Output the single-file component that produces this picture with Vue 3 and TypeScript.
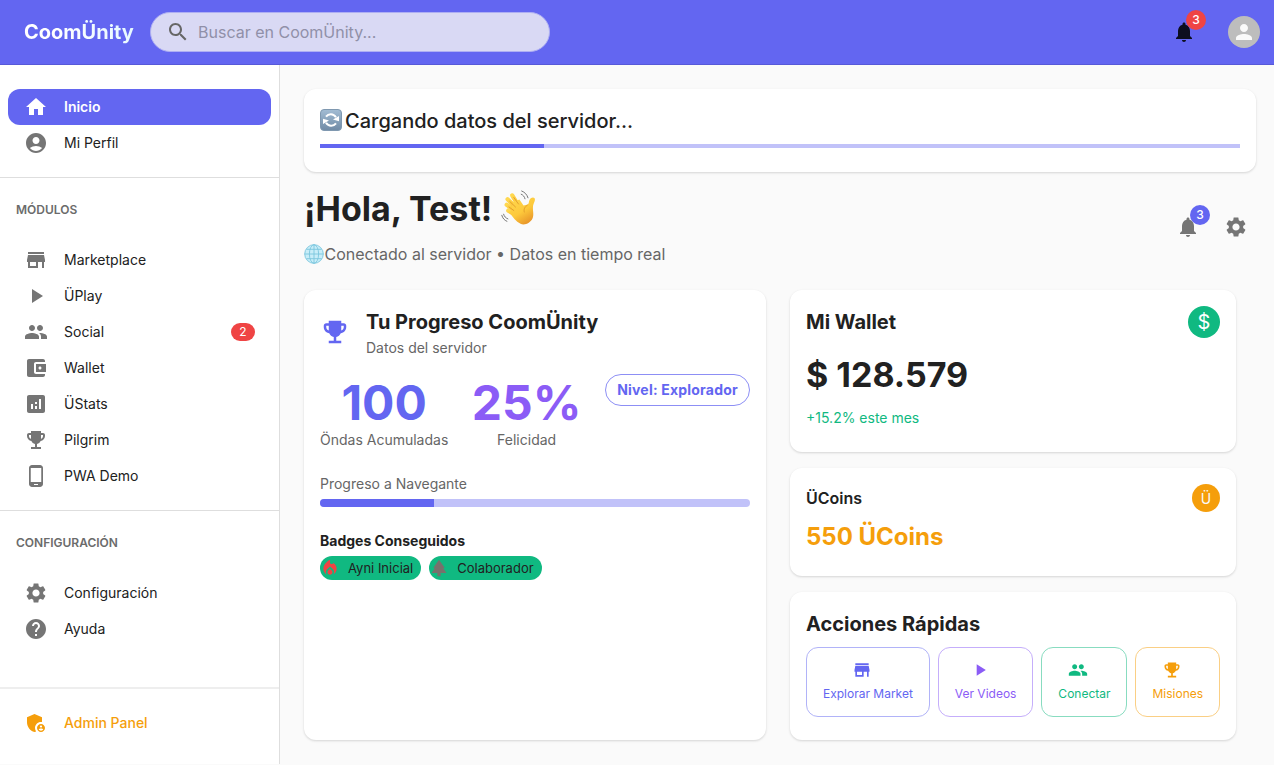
<script setup lang="ts">
interface NavItem {
  label: string
  icon: string
  badge?: number
}

interface QuickAction {
  label: string
  icon: string
  tone: string
}

const icons: Record<string, string> = {
  search:
    'M15.5 14h-.79l-.28-.27C15.41 12.59 16 11.11 16 9.5 16 5.91 13.09 3 9.5 3S3 5.91 3 9.5 5.91 16 9.5 16c1.61 0 3.09-.59 4.23-1.57l.27.28v.79l5 4.99L20.49 19zm-6 0C7.01 14 5 11.99 5 9.5S7.01 5 9.5 5 14 7.01 14 9.5 11.99 14 9.5 14',
  bell: 'M12 22c1.1 0 2-.9 2-2h-4c0 1.1.89 2 2 2m6-6v-5c0-3.07-1.64-5.64-4.5-6.32V4c0-.83-.67-1.5-1.5-1.5s-1.5.67-1.5 1.5v.68C7.63 5.36 6 7.92 6 11v5l-2 2v1h16v-1z',
  person:
    'M12 12c2.21 0 4-1.79 4-4s-1.79-4-4-4-4 1.79-4 4 1.79 4 4 4m0 2c-2.67 0-8 1.34-8 4v2h16v-2c0-2.66-5.33-4-8-4',
  home: 'M10 20v-6h4v6h5v-8h3L12 3 2 12h3v8z',
  account:
    'M12 2C6.48 2 2 6.48 2 12s4.48 10 10 10 10-4.48 10-10S17.52 2 12 2m0 4c1.93 0 3.5 1.57 3.5 3.5S13.93 13 12 13s-3.5-1.57-3.5-3.5S10.07 6 12 6m0 14c-2.03 0-4.43-.82-6.14-2.88C7.55 15.8 9.68 15 12 15s4.45.8 6.14 2.12C16.43 19.18 14.03 20 12 20',
  store: 'M20 4H4v2h16zm1 10v-2l-1-5H4l-1 5v2h1v6h10v-6h4v6h2v-6zm-9 4H6v-4h6z',
  play: 'M8 5v14l11-7z',
  people:
    'M16 11c1.66 0 2.99-1.34 2.99-3S17.66 5 16 5s-3 1.34-3 3 1.34 3 3 3m-8 0c1.66 0 2.99-1.34 2.99-3S9.66 5 8 5 5 6.34 5 8s1.34 3 3 3m0 2c-2.33 0-7 1.17-7 3.5V19h14v-2.5c0-2.33-4.67-3.5-7-3.5m8 0c-.29 0-.62.02-.97.05 1.16.84 1.97 1.97 1.97 3.45V19h6v-2.5c0-2.33-4.67-3.5-7-3.5',
  wallet:
    'M21 18v1c0 1.1-.9 2-2 2H5c-1.11 0-2-.9-2-2V5c0-1.1.89-2 2-2h14c1.1 0 2 .9 2 2v1h-9c-1.11 0-2 .9-2 2v8c0 1.1.89 2 2 2zm-9-2h10V8H12zm4-2.5c-.83 0-1.5-.67-1.5-1.5s.67-1.5 1.5-1.5 1.5.67 1.5 1.5-.67 1.5-1.5 1.5',
  stats:
    'M19 3H5c-1.1 0-2 .9-2 2v14c0 1.1.9 2 2 2h14c1.1 0 2-.9 2-2V5c0-1.1-.9-2-2-2M9 17H7v-5h2zm4 0h-2v-3h2zm0-5h-2v-2h2zm4 5h-2V7h2z',
  trophy:
    'M19 5h-2V3H7v2H5c-1.1 0-2 .9-2 2v1c0 2.55 1.92 4.63 4.39 4.94.63 1.5 1.98 2.63 3.61 2.96V19H7v2h10v-2h-4v-3.1c1.63-.33 2.98-1.46 3.61-2.96C19.08 12.63 21 10.55 21 8V7c0-1.1-.9-2-2-2M5 8V7h2v3.82C5.84 10.4 5 9.3 5 8m14 0c0 1.3-.84 2.4-2 2.82V7h2z',
  phone:
    'M16 1H8C6.34 1 5 2.34 5 4v16c0 1.66 1.34 3 3 3h8c1.66 0 3-1.34 3-3V4c0-1.66-1.34-3-3-3m-2 20h-4v-1h4zm3.25-3H6.75V4h10.5z',
  gear: 'M19.14 12.94c.04-.3.06-.61.06-.94 0-.32-.02-.64-.07-.94l2.03-1.58c.18-.14.23-.41.12-.61l-1.92-3.32c-.12-.22-.37-.29-.59-.22l-2.39.96c-.5-.38-1.03-.7-1.62-.94l-.36-2.54c-.04-.24-.24-.41-.48-.41h-3.84c-.24 0-.43.17-.47.41l-.36 2.54c-.59.24-1.13.57-1.62.94l-2.39-.96c-.22-.08-.47 0-.59.22L2.74 8.87c-.12.21-.08.47.12.61l2.03 1.58c-.05.3-.09.63-.09.94s.02.64.07.94l-2.03 1.58c-.18.14-.23.41-.12.61l1.92 3.32c.12.22.37.29.59.22l2.39-.96c.5.38 1.03.7 1.62.94l.36 2.54c.05.24.24.41.48.41h3.84c.24 0 .44-.17.47-.41l.36-2.54c.59-.24 1.13-.56 1.62-.94l2.39.96c.22.08.47 0 .59-.22l1.92-3.32c.12-.22.07-.47-.12-.61zM12 15.6c-1.98 0-3.6-1.62-3.6-3.6s1.62-3.6 3.6-3.6 3.6 1.62 3.6 3.6-1.62 3.6-3.6 3.6',
  help: 'M12 2C6.48 2 2 6.48 2 12s4.48 10 10 10 10-4.48 10-10S17.52 2 12 2m1 17h-2v-2h2zm2.07-7.75-.9.92C13.45 12.9 13 13.5 13 15h-2v-.5c0-1.1.45-2.1 1.17-2.83l1.24-1.26c.37-.36.59-.86.59-1.41 0-1.1-.9-2-2-2s-2 .9-2 2H8c0-2.21 1.79-4 4-4s4 1.79 4 4c0 .88-.36 1.68-.93 2.25',
  admin:
    'M17 11c.34 0 .67.04 1 .09V6.27L10.5 3 3 6.27v4.91c0 4.54 3.2 8.79 7.5 9.82.55-.13 1.08-.32 1.6-.55-.69-.98-1.1-2.17-1.1-3.45 0-3.31 2.69-6 6-6M17 13c-2.21 0-4 1.79-4 4s1.79 4 4 4 4-1.79 4-4-1.79-4-4-4m0 1.38c.62 0 1.12.51 1.12 1.12s-.51 1.12-1.12 1.12-1.12-.51-1.12-1.12.5-1.12 1.12-1.12m0 5.37c-.93 0-1.74-.46-2.24-1.17.05-.72 1.51-1.08 2.24-1.08s2.19.36 2.24 1.08c-.5.71-1.31 1.17-2.24 1.17',
  fire: 'm12 12.9-2.13 2.09c-.56.56-.87 1.29-.87 2.07C9 18.68 10.35 20 12 20s3-1.32 3-2.94c0-.78-.31-1.52-.87-2.07zM16 6l-.44.55C14.38 8.02 12 7.19 12 5.3V2S4 6 4 13c0 2.92 1.56 5.47 3.89 6.86-.56-.79-.89-1.76-.89-2.8 0-1.32.52-2.56 1.47-3.5L12 10.1l3.53 3.47c.95.93 1.47 2.17 1.47 3.5 0 1.02-.31 1.96-.85 2.75 1.89-1.15 3.29-3.06 3.71-5.3.66-3.55-1.07-6.9-3.86-8.52',
  tree: 'M17 12h2L12 2 5.05 12H7l-3.9 6h6.92v4h3.96v-4H21z',
}

const modules: NavItem[] = [
  { label: 'Marketplace', icon: 'store' },
  { label: 'ÜPlay', icon: 'play' },
  { label: 'Social', icon: 'people', badge: 2 },
  { label: 'Wallet', icon: 'wallet' },
  { label: 'ÜStats', icon: 'stats' },
  { label: 'Pilgrim', icon: 'trophy' },
  { label: 'PWA Demo', icon: 'phone' },
]

const settings: NavItem[] = [
  { label: 'Configuración', icon: 'gear' },
  { label: 'Ayuda', icon: 'help' },
]

const actions: QuickAction[] = [
  { label: 'Explorar Market', icon: 'store', tone: 'indigo' },
  { label: 'Ver Videos', icon: 'play', tone: 'violet' },
  { label: 'Conectar', icon: 'people', tone: 'green' },
  { label: 'Misiones', icon: 'trophy', tone: 'amber' },
]
</script>

<template>
  <div class="app">
    <header class="topbar">
      <div class="logo">CoomÜnity</div>
      <div class="search">
        <svg class="icon" viewBox="0 0 24 24"><path :d="icons.search" /></svg>
        <span>Buscar en CoomÜnity...</span>
      </div>
      <div class="topbar-right">
        <button class="icon-btn dark">
          <span class="badge-wrap">
            <svg class="icon" viewBox="0 0 24 24"><path :d="icons.bell" /></svg>
            <span class="badge red">3</span>
          </span>
        </button>
        <div class="avatar">
          <svg class="icon" viewBox="0 0 24 24"><path :d="icons.person" /></svg>
        </div>
      </div>
    </header>

    <div class="body">
      <aside class="sidebar">
        <nav class="group first">
          <a class="item active">
            <svg class="icon" viewBox="0 0 24 24"><path :d="icons.home" /></svg>
            <span>Inicio</span>
          </a>
          <a class="item">
            <svg class="icon" viewBox="0 0 24 24"><path :d="icons.account" /></svg>
            <span>Mi Perfil</span>
          </a>
        </nav>
        <nav class="group">
          <div class="group-title">MÓDULOS</div>
          <a v-for="item in modules" :key="item.label" class="item">
            <svg class="icon" viewBox="0 0 24 24"><path :d="icons[item.icon]" /></svg>
            <span>{{ item.label }}</span>
            <span v-if="item.badge" class="count">{{ item.badge }}</span>
          </a>
        </nav>
        <nav class="group">
          <div class="group-title">CONFIGURACIÓN</div>
          <a v-for="item in settings" :key="item.label" class="item">
            <svg class="icon" viewBox="0 0 24 24"><path :d="icons[item.icon]" /></svg>
            <span>{{ item.label }}</span>
          </a>
        </nav>
        <nav class="admin">
          <a class="item">
            <svg class="icon" viewBox="0 0 24 24"><path :d="icons.admin" /></svg>
            <span>Admin Panel</span>
          </a>
        </nav>
      </aside>

      <main class="main">
        <section class="card loading">
          <div class="loading-title">
            <svg class="emoji-refresh" viewBox="0 0 22 22">
              <defs>
                <linearGradient id="refresh-bg" x1="0" y1="0" x2="0" y2="1">
                  <stop offset="0" stop-color="#a3bdd4" />
                  <stop offset="1" stop-color="#6f8aa5" />
                </linearGradient>
              </defs>
              <rect x=".5" y=".5" width="21" height="21" rx="3.5" fill="url(#refresh-bg)" stroke="#7f98b0" />
              <g fill="none" stroke="#fff" stroke-width="2">
                <path d="M6 7.600C8.600 4.300 13.400 4.300 16 8.200" />
                <path d="M16 14.400C13.400 17.700 8.600 17.700 6 13.800" />
              </g>
              <path d="M19 7V12.200L13 10.600ZM3 15V9.800L9 11.400Z" fill="#fff" />
            </svg>
            <span>Cargando datos del servidor...</span>
          </div>
          <div class="bar loading-bar"><div class="fill"></div></div>
        </section>

        <section class="welcome">
          <div>
            <h1>
              <span>¡Hola, Test!</span>
              <svg class="emoji-wave" viewBox="0 0 36 36">
                <defs>
                  <linearGradient id="hand" x1="0" y1="0" x2=".6" y2="1">
                    <stop offset="0" stop-color="#ffd84f" />
                    <stop offset=".6" stop-color="#fdc93b" />
                    <stop offset="1" stop-color="#e9982a" />
                  </linearGradient>
                </defs>
                <g fill="none" stroke="url(#hand)" stroke-linecap="round" stroke-width="4.300">
                  <path d="M18.500 17.500 11.200 5.400" />
                  <path d="M16 18.500 6.600 9.300" />
                  <path d="M15 21.500 5.700 14.800" />
                  <path d="M15 25 7.300 20.600" />
                </g>
                <path
                  d="M10 21 8.500 22.300C11.500 27 15 31.500 19.500 33.800 24 36 29.500 32.500 31.500 28.500 33.300 24.500 31.500 20.500 32 16.500 32.300 13.500 34.800 10.500 33.600 8.300 32.500 6.800 29.800 7.500 28.700 9.500 27.600 11.500 28.200 13.500 26.800 14.600L22.500 15.500 18.400 9.500 12 12Z"
                  fill="url(#hand)"
                />
                <g fill="none" stroke="#dc9227" stroke-width=".8" stroke-linecap="round">
                  <path d="M17.500 14 12.800 7.500M14.500 17 8.800 11.500M12.800 20.500 8 17M26.500 15C23.500 17 22.500 19.500 23.300 22" />
                </g>
                <g fill="none" stroke="#777" stroke-width="1" stroke-linecap="round">
                  <path d="M20.200 4.200C22.200 5 23.500 6.700 24 8.800M20.700 1C23.900 2.300 26 4.500 27 7.800M2.600 24.200C3.300 26.500 4.600 28 6.900 28.900M.8 25.300C1.700 28.300 3.300 30.300 5.900 31.300" />
                </g>
              </svg>
            </h1>
            <p class="subtitle">
              <svg class="emoji-globe" viewBox="0 0 20 20">
                <circle cx="10" cy="10" r="9.300" fill="#c8edf8" />
                <g fill="none" stroke="#7cc6de" stroke-width=".9">
                  <circle cx="10" cy="10" r="9.300" />
                  <ellipse cx="10" cy="10" rx="4.600" ry="9.300" />
                  <path d="M10 .7v18.600M.7 10h18.600M2.500 5.300h15M2.500 14.700h15" />
                </g>
              </svg>
              <span>Conectado al servidor • Datos en tiempo real</span>
            </p>
          </div>
          <div class="welcome-actions">
            <button class="icon-btn">
              <span class="badge-wrap">
                <svg class="icon" viewBox="0 0 24 24"><path :d="icons.bell" /></svg>
                <span class="badge indigo-bg">3</span>
              </span>
            </button>
            <button class="icon-btn">
              <svg class="icon" viewBox="0 0 24 24"><path :d="icons.gear" /></svg>
            </button>
          </div>
        </section>

        <div class="grid">
          <section class="card progress">
            <div class="progress-head">
              <svg class="icon trophy" viewBox="0 0 24 24"><path :d="icons.trophy" /></svg>
              <div>
                <h2>Tu Progreso CoomÜnity</h2>
                <p class="muted">Datos del servidor</p>
              </div>
            </div>
            <div class="stats">
              <div class="stat">
                <div class="stat-value indigo">100</div>
                <div class="muted">Öndas Acumuladas</div>
              </div>
              <div class="stat">
                <div class="stat-value violet">25%</div>
                <div class="muted">Felicidad</div>
              </div>
              <div class="level">Nivel: Explorador</div>
            </div>
            <div class="muted level-label">Progreso a Navegante</div>
            <div class="bar level-bar"><div class="fill"></div></div>
            <h3>Badges Conseguidos</h3>
            <div class="chips">
              <div class="chip">
                <svg class="fire" viewBox="0 0 24 24"><path :d="icons.fire" /></svg>
                <span>Ayni Inicial</span>
              </div>
              <div class="chip">
                <svg class="tree" viewBox="0 0 24 24"><path :d="icons.tree" /></svg>
                <span>Colaborador</span>
              </div>
            </div>
          </section>

          <div class="column">
            <section class="card wallet">
              <div class="row">
                <h2>Mi Wallet</h2>
                <div class="coin dollar">$</div>
              </div>
              <div class="amount">$ 128.579</div>
              <div class="trend">+15.2% este mes</div>
            </section>
            <section class="card coins">
              <div class="row">
                <h4>ÜCoins</h4>
                <div class="coin umlaut">Ü</div>
              </div>
              <div class="coins-amount">550 ÜCoins</div>
            </section>
            <section class="card quick">
              <h2>Acciones Rápidas</h2>
              <div class="actions">
                <button v-for="a in actions" :key="a.label" class="action" :class="a.tone">
                  <svg viewBox="0 0 24 24"><path :d="icons[a.icon]" /></svg>
                  <span>{{ a.label }}</span>
                </button>
              </div>
            </section>
          </div>
        </div>
      </main>
    </div>
  </div>
</template>

<style>
html,
body {
  margin: 0;
  background: #fafafa;
}
</style>

<style scoped>
.app {
  height: 765px;
  overflow: hidden;
  background: #fafafa;
  color: #212121;
  font-family: Inter, 'Noto Sans', sans-serif;
  font-size: 14px;
}
.app *,
.app {
  box-sizing: border-box;
}
h1,
h2,
h3,
h4,
p {
  margin: 0;
}
button {
  font-family: inherit;
  padding: 0;
  background: none;
  border: 0;
}
svg {
  display: block;
  flex: none;
}
.icon {
  width: 24px;
  height: 24px;
  fill: currentColor;
}

/* Top bar */
.topbar {
  height: 65px;
  display: flex;
  align-items: center;
  padding: 0 14px 1px 24px;
  background: #6366f1;
  box-shadow: inset 0 -1px 0 #5759d8;
}
.logo {
  width: 126px;
  font-size: 20px;
  font-weight: 700;
  line-height: 32px;
  background: linear-gradient(45deg, #fff 30%, #e0f7ff 90%);
  -webkit-background-clip: text;
  background-clip: text;
  color: transparent;
  white-space: nowrap;
}
.search {
  width: 400px;
  height: 40px;
  display: flex;
  align-items: center;
  gap: 8px;
  padding-left: 15px;
  border: 1px solid #aeaff3;
  border-radius: 20px;
  background: #d9d9f4;
  color: #9090a8;
  font-size: 16px;
}
.search .icon {
  color: #666;
}
.topbar-right {
  margin-left: auto;
  display: flex;
  align-items: center;
  gap: 24px;
}
.icon-btn {
  width: 40px;
  height: 40px;
  display: flex;
  align-items: center;
  justify-content: center;
  color: #757575;
}
.icon-btn.dark {
  color: #0d0e20;
}
.badge-wrap {
  position: relative;
  display: flex;
}
.badge {
  position: absolute;
  top: -10px;
  right: -10px;
  width: 20px;
  height: 20px;
  border-radius: 10px;
  color: #fff;
  font-size: 12px;
  font-weight: 500;
  line-height: 20px;
  text-align: center;
}
.red {
  background: #ef4444;
}
.indigo-bg {
  background: #6366f1;
}
.avatar {
  width: 32px;
  height: 32px;
  display: flex;
  align-items: center;
  justify-content: center;
  border-radius: 50%;
  background: #bdbdbd;
  color: #fafafa;
}

/* Sidebar */
.body {
  display: flex;
  align-items: flex-start;
}
.sidebar {
  width: 280px;
  height: 699px;
  display: flex;
  flex-direction: column;
  background: #fff;
  border-right: 1px solid #dedede;
}
.group {
  padding: 16px 8px;
  border-bottom: 1px solid #dedede;
}
.group.first {
  padding-top: 24px;
}
.group:nth-of-type(3) {
  border-bottom: 0;
}
.group-title {
  height: 32px;
  margin-bottom: 16px;
  padding-left: 8px;
  font-size: 12px;
  font-weight: 600;
  line-height: 32px;
  color: #6b6b6b;
}
.item {
  height: 36px;
  display: flex;
  align-items: center;
  gap: 16px;
  padding: 0 16px;
  border-radius: 12px;
  font-size: 14px;
  line-height: 20px;
}
.item.active {
  background: #6366f1;
  color: #fff;
  font-weight: 600;
}
.item .icon {
  color: #757575;
}
.item.active .icon {
  color: #fff;
}
.count {
  width: 24px;
  height: 18px;
  margin-left: auto;
  border-radius: 9px;
  background: #ef4444;
  color: #fff;
  font-size: 12px;
  line-height: 18px;
  text-align: center;
}
.admin {
  margin-top: auto;
  height: 77px;
  padding: 16px 8px 0;
  border-top: 2px solid #eee;
}
.admin .item,
.admin .item .icon {
  color: #f59e0b;
  font-weight: 500;
}

/* Main area */
.main {
  flex: 1;
  padding: 24px 18px 0 24px;
}
.card {
  background: #fff;
  border-radius: 12px;
  box-shadow: 0 1px 3px rgba(0, 0, 0, 0.1), 0 1px 2px rgba(0, 0, 0, 0.06);
}
.loading {
  height: 83px;
  padding: 16px;
}
.loading-title {
  height: 32px;
  display: flex;
  align-items: center;
  gap: 3px;
  font-size: 20px;
  font-weight: 500;
}
.emoji-refresh {
  width: 22px;
  height: 22px;
  margin-top: -2px;
}
.bar {
  background: #c1c2f9;
  overflow: hidden;
}
.fill {
  height: 100%;
  background: #6366f1;
}
.loading-bar {
  height: 4px;
  margin-top: 7px;
}
.loading-bar .fill {
  width: 224px;
}
.welcome {
  height: 102px;
  margin-top: 16px;
  display: flex;
  justify-content: space-between;
}
h1 {
  height: 42px;
  display: flex;
  align-items: center;
  gap: 9px;
  font-size: 34px;
  font-weight: 700;
  line-height: 42px;
}
.emoji-wave {
  width: 36px;
  height: 36px;
  margin-top: -3px;
}
.subtitle {
  height: 24px;
  margin-top: 12px;
  display: flex;
  align-items: center;
  font-size: 16px;
  color: #666;
}
.emoji-globe {
  width: 20px;
  height: 20px;
  margin-right: 0.5px;
}
.welcome-actions {
  height: 78px;
  display: flex;
  align-items: center;
  gap: 8px;
}

.grid {
  width: 932px;
  height: 450px;
  display: grid;
  grid-template-columns: 462px 446px;
  gap: 24px;
}
h2 {
  font-size: 20px;
  font-weight: 700;
  line-height: 32px;
}
.muted {
  font-size: 14px;
  line-height: 20px;
  color: #666;
}
.indigo {
  color: #6366f1;
}
.violet {
  color: #8b5cf6;
}
.progress {
  padding: 16px;
}
.progress-head {
  height: 52px;
  display: flex;
  align-items: center;
  gap: 16px;
}
.icon.trophy {
  width: 30px;
  height: 30px;
  color: #6366f1;
}
.stats {
  height: 92px;
  margin-top: 16px;
  display: flex;
  justify-content: space-between;
}
.stat {
  text-align: center;
}
.stat-value {
  height: 56px;
  font-size: 48px;
  font-weight: 700;
  line-height: 57px;
}
.level {
  width: 145px;
  height: 32px;
  border: 1px solid #8d8ff5;
  border-radius: 16px;
  color: #6366f1;
  font-weight: 700;
  line-height: 30px;
  letter-spacing: 0.2px;
  text-align: center;
}
.level-label {
  margin-top: 8px;
}
.level-bar {
  height: 8px;
  margin-top: 5px;
  border-radius: 4px;
}
.level-bar .fill {
  width: 114px;
}
h3 {
  margin-top: 24px;
  font-size: 14px;
  font-weight: 700;
  line-height: 20px;
}
.chips {
  display: flex;
  gap: 8px;
  margin-top: 5px;
}
.chip {
  height: 24px;
  display: flex;
  align-items: center;
  gap: 8px;
  padding-right: 8px;
  border-radius: 12px;
  background: #10b981;
  font-size: 13px;
}
.chip svg {
  width: 20px;
  height: 20px;
}
.fire {
  fill: #ef4444;
}
.tree {
  fill: #78716c;
}

.column {
  display: flex;
  flex-direction: column;
  gap: 16px;
}
.column .card {
  padding: 16px;
}
.row {
  display: flex;
  justify-content: space-between;
  align-items: center;
}
.wallet {
  height: 162px;
}
.coin {
  display: flex;
  align-items: center;
  justify-content: center;
  border-radius: 50%;
  color: #fff;
}
.dollar {
  width: 32px;
  height: 32px;
  background: #10b981;
  font-size: 20px;
}
.umlaut {
  width: 28px;
  height: 28px;
  background: #f59e0b;
  color: #fafafa;
  font-size: 14px;
}
.amount {
  margin-top: 16px;
  font-size: 34px;
  font-weight: 700;
  line-height: 42px;
}
.trend {
  margin-top: 12px;
  line-height: 20px;
  color: #10b981;
}
.coins {
  height: 108px;
}
h4 {
  font-size: 16px;
  font-weight: 600;
  line-height: 28px;
}
.coins-amount {
  margin-top: 9px;
  font-size: 24px;
  font-weight: 700;
  line-height: 32px;
  color: #f59e0b;
}
.quick {
  height: 148px;
}
.actions {
  margin-top: 7px;
  display: flex;
  gap: 8px;
}
.action {
  flex: 1 1 auto;
  height: 69.5px;
  display: flex;
  flex-direction: column;
  align-items: center;
  justify-content: center;
  gap: 4px;
  border: 1px solid;
  border-radius: 12px;
  font-size: 12px;
  line-height: 20px;
}
.action svg {
  width: 20px;
  height: 20px;
  margin-right: 12px;
  fill: currentColor;
}
.action.indigo {
  border-color: #b1b3f8;
}
.action.violet {
  border-color: #c5aefb;
}
.action.green {
  color: #10b981;
  border-color: #88dcc0;
}
.action.amber {
  color: #f59e0b;
  border-color: #facf85;
}
</style>
